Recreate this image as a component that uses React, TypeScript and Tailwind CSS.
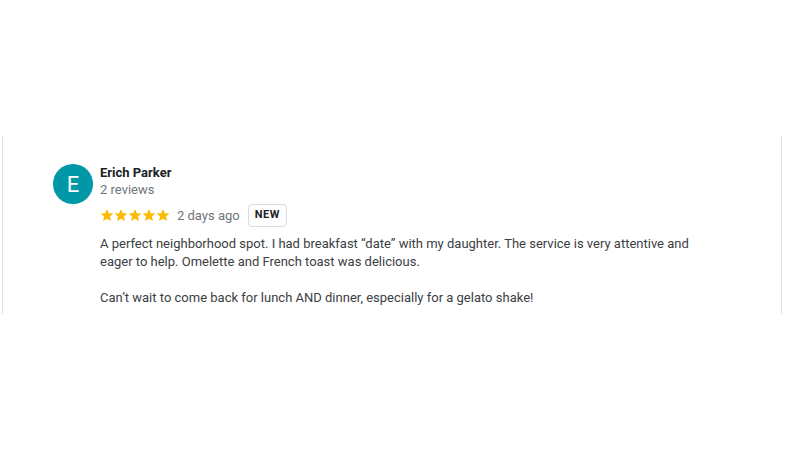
const stars = [0, 1, 2, 3, 4];

function Star() {
  return (
    <svg viewBox="1 1.5 22 21" className="h-[14px] w-[14px] fill-[#fbbc04]" aria-hidden>
      <path d="M12 2.5l2.9 6.6 7.1.6-5.4 4.7 1.6 7-6.2-3.7-6.2 3.7 1.6-7L2 9.7l7.1-.6z" />
    </svg>
  );
}

export default function App() {
  return (
    <div className="min-h-[450px] bg-white pt-[137px] font-['Roboto',sans-serif]">
      <div className="ml-[2px] w-[780px] border-x border-[#e0e0e0] pb-[7px] pl-[50px] pt-[27px]">
        <div className="flex gap-[7px]">
          <div className="flex h-[40px] w-[40px] shrink-0 items-center justify-center rounded-full bg-[#0097a7] text-[22px] text-white">
            E
          </div>
          <div className="flex flex-col">
            <div className="text-[13px] font-bold leading-[17px] text-[#202124]">
              Erich Parker
            </div>
            <div className="text-[13px] leading-[17px] text-[#70757a]">2 reviews</div>
            <div className="mt-[6px] flex items-center">
              <div className="flex">
                {stars.map((s) => (
                  <Star key={s} />
                ))}
              </div>
              <span className="ml-[7px] text-[13px] text-[#70757a]">2 days ago</span>
              <span className="ml-[8px] rounded-[4px] border border-[#dadce0] px-[6px] py-[2px] text-[11px] font-bold tracking-[0.6px] text-[#202124]">
                NEW
              </span>
            </div>
            <p className="mt-[8px] w-[600px] whitespace-pre-line text-[13px] leading-[18px] text-[#3c4043]">
              {'A perfect neighborhood spot. I had breakfast \u201cdate\u201d with my daughter. The service is very attentive and eager to help. Omelette and French toast was delicious.\n\nCan\u2019t wait to come back for lunch AND dinner, especially for a gelato shake!'}
            </p>
          </div>
        </div>
      </div>
    </div>
  );
}
